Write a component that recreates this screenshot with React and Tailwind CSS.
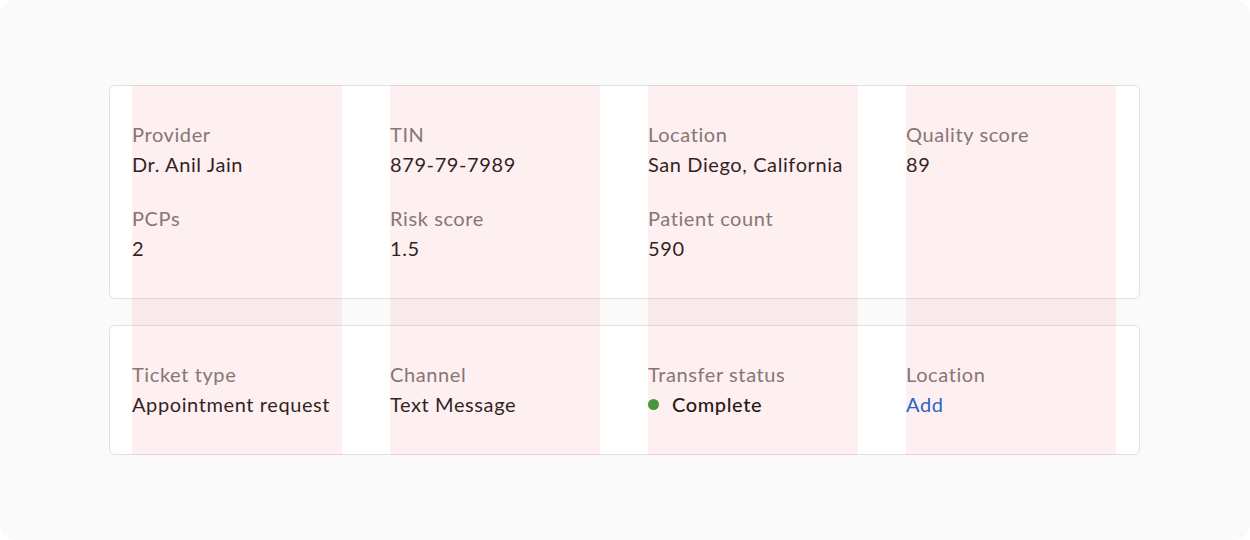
const topFields = [
	{ label: "Provider", value: "Dr. Anil Jain" },
	{ label: "TIN", value: "879-79-7989" },
	{ label: "Location", value: "San Diego, California" },
	{ label: "Quality score", value: "89" },
	{ label: "PCPs", value: "2" },
	{ label: "Risk score", value: "1.5" },
	{ label: "Patient count", value: "590" },
];

function Field({ label, children }) {
	return (
		<div className="text-[20px] leading-[30px] tracking-[0.6px]">
			<p className="text-[#7d7b7b]">{label}</p>
			<div className="text-[#1f1f1f]">{children}</div>
		</div>
	);
}

function App() {
	return (
		<div className="h-[540px] w-[1250px] rounded-2xl bg-[#fafafa] pt-[85px] font-['Lato','Noto_Sans',sans-serif]">
			<div className="relative ml-[109px] w-[1031px]">
				<section className="rounded-md border border-[#e2e2e2] bg-white pb-[35px] pl-[22px] pr-[23px] pt-[33px]">
					<div className="grid grid-cols-4 gap-x-12 gap-y-6">
						{topFields.map((f) => (
							<Field key={f.label} label={f.label}>
								{f.value}
							</Field>
						))}
					</div>
				</section>

				<section className="mt-[26px] rounded-md border border-[#e2e2e2] bg-white pb-[35px] pl-[22px] pr-[23px] pt-[33px]">
					<div className="grid grid-cols-4 gap-x-12">
						<Field label="Ticket type">Appointment request</Field>
						<Field label="Channel">Text Message</Field>
						<Field label="Transfer status">
							<span className="flex items-center gap-[13px] font-medium text-[#161616]">
								<span className="h-[11px] w-[11px] rounded-full bg-[#3a9f3e]" />
								Complete
							</span>
						</Field>
						<Field label="Location">
							<span className="text-[#1668d2]">Add</span>
						</Field>
					</div>
				</section>

				{/* column grid overlay */}
				<div className="pointer-events-none absolute inset-0 grid grid-cols-4 gap-x-12 pl-[23px] pr-[24px]">
					<div className="bg-[rgba(239,68,68,0.08)]" />
					<div className="bg-[rgba(239,68,68,0.08)]" />
					<div className="bg-[rgba(239,68,68,0.08)]" />
					<div className="bg-[rgba(239,68,68,0.08)]" />
				</div>
			</div>
		</div>
	);
}

export default App;
